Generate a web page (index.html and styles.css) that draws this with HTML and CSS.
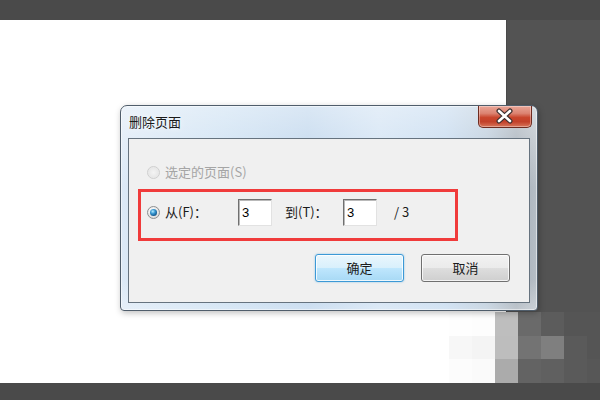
FILE: index.html
```html
<!DOCTYPE html>
<html lang="zh-CN">
<head>
<meta charset="utf-8">
<title>删除页面</title>
<link rel="stylesheet" href="styles.css">
</head>
<body>
<div class="screen">
  <div class="topbar"></div>
  <div class="middle">
    <div class="canvas"></div>
    <div class="sidepanel"></div>
  </div>
  <div class="bottombar"></div>

  <div class="mosaic">
    <i style="background:#fefefe"></i><i style="background:#fdfdfd"></i><i style="background:#bebebe"></i><i style="background:#6a6a6a"></i><i style="background:#5c5c5c"></i><i style="background:#555555"></i><i style="background:#555555"></i>
    <i style="background:#f7f7f7"></i><i style="background:#f4f4f4"></i><i style="background:#bdbdbd"></i><i style="background:#737373"></i><i style="background:#7f7f7f"></i><i style="background:#5a5a5a"></i><i style="background:#555555"></i>
    <i style="background:#fcfcfc"></i><i style="background:#fafafa"></i><i style="background:#ababab"></i><i style="background:#636363"></i><i style="background:#606060"></i><i style="background:#5a5a5a"></i><i style="background:#575757"></i>
  </div>

  <div class="dialog">
    <div class="titlebar">
      <span class="title">删除页面</span>
    </div>
    <button class="close" aria-label="关闭">
      <svg width="20" height="16" viewBox="0 0 20 16">
        <path d="M4 3 L15 13 M15 3 L4 13" stroke="#3d3030" stroke-width="5" stroke-linecap="round" fill="none"/>
        <path d="M4 3 L15 13 M15 3 L4 13" stroke="#ffffff" stroke-width="2.6" stroke-linecap="round" fill="none"/>
      </svg>
    </button>
    <div class="client">
      <div class="row disabled">
        <span class="radio radio-off"></span>
        <span class="label">选定的页面(S)</span>
      </div>
      <div class="range">
        <span class="radio radio-on"></span>
        <span class="label from-label">从(F)：</span>
        <input class="field" type="text" value="3" readonly>
        <span class="label to-label">到(T)：</span>
        <input class="field" type="text" value="3" readonly>
        <span class="label total">/ 3</span>
      </div>
      <div class="actions">
        <button class="btn btn-default">确定</button>
        <button class="btn">取消</button>
      </div>
    </div>
  </div>
</div>
</body>
</html>
```

FILE: styles.css
```css
* { box-sizing: border-box; }

html, body {
  margin: 0;
  padding: 0;
  width: 600px;
  height: 400px;
  overflow: hidden;
  font-family: "Noto Sans CJK SC", "Liberation Sans", sans-serif;
}

.screen {
  position: relative;
  width: 600px;
  height: 400px;
  display: flex;
  flex-direction: column;
  background: #ffffff;
}

.topbar {
  height: 20px;
  background: #4a4a4a;
}

.middle {
  flex: 1;
  display: flex;
}

.canvas {
  flex: 1;
  background: #ffffff;
}

.sidepanel {
  width: 94px;
  background: #535353;
  border-left: 1px solid #494949;
}

.bottombar {
  height: 17px;
  background: #4a4a4a;
}

/* pixelated area */
.mosaic {
  position: absolute;
  left: 449px;
  top: 312px;
  display: grid;
  grid-template-columns: repeat(6, 23px) 13px;
  grid-template-rows: 24px 23px 24px;
}
.mosaic i { display: block; }

/* dialog window */
.dialog {
  position: absolute;
  left: 120px;
  top: 105px;
  width: 418px;
  height: 206px;
  border: 1px solid #4f5d6b;
  border-radius: 7px 7px 4px 4px;
  padding: 0 7px 7px 7px;
  display: flex;
  flex-direction: column;
  background:
    linear-gradient(to bottom, rgba(255,255,255,0.45), rgba(255,255,255,0) 40%, rgba(255,255,255,0) 85%, rgba(255,255,255,0.3)),
    linear-gradient(to right, #dce9f6 0%, #cadff2 25%, #bcd4ec 45%, #cfe1f3 62%, #c3d9ef 78%, #b8c9d9 88%, #a3adb7 95%, #b6bec6 100%);
  box-shadow: 0 0 0 1px rgba(255,255,255,0.5) inset, 1px 2px 6px rgba(0,0,0,0.25);
}

.titlebar {
  height: 32px;
  display: flex;
  align-items: center;
  padding-left: 1px;
}

.title {
  font-size: 13px;
  line-height: 16px;
  color: #1a1a1a;
  text-shadow: 0 0 6px rgba(255,255,255,0.9);
}

.close {
  position: absolute;
  top: 0;
  right: 5px;
  width: 54px;
  height: 22px;
  margin: 0;
  padding: 0;
  border: 1px solid #6e2b20;
  border-top: none;
  border-radius: 0 0 5px 5px;
  background: linear-gradient(to bottom, #e9a597 0%, #dc8371 35%, #c9452c 55%, #c2412a 75%, #d8765b 100%);
  box-shadow: inset 0 0 0 1px rgba(255,255,255,0.35);
  display: flex;
  align-items: center;
  justify-content: center;
}
.close svg { display: block; margin-top: -1px; }

.client {
  flex: 1;
  background: #f0f0f0;
  border: 1px solid #66737f;
  padding-top: 25px;
  display: flex;
  flex-direction: column;
  align-items: flex-start;
}

.label {
  font-size: 13px;
  line-height: 16px;
  color: #1b1b1b;
  white-space: nowrap;
}

.row {
  height: 16px;
  margin-left: 18px;
  display: flex;
  align-items: center;
  gap: 5px;
}
.row.disabled .label { color: #a5a5a5; }

.radio {
  position: relative;
  width: 13px;
  height: 13px;
  border-radius: 50%;
  flex: none;
}
.radio-off {
  border: 1px solid #cfcfcf;
  background: radial-gradient(circle at 50% 50%, #f4f4f4 0%, #e8e8e8 60%, #f6f6f6 100%);
}
.radio-on {
  border: 1px solid #8d8f91;
  background: radial-gradient(circle at 40% 35%, #ffffff 0%, #e6e6e6 55%, #cfcfcf 100%);
}
.radio-on::after {
  content: "";
  position: absolute;
  left: 2px;
  top: 2px;
  width: 7px;
  height: 7px;
  border-radius: 50%;
  background: radial-gradient(circle at 40% 35%, #b8ecff 0%, #3a9ad4 35%, #155d93 70%, #0d3c63 100%);
}

.range {
  margin-top: 9px;
  margin-left: 9px;
  width: 320px;
  height: 52px;
  border: 3px solid #f03b3b;
  padding: 0 0 6px 6px;
  display: flex;
  align-items: center;
}
.from-label { margin-left: 5px; width: 73px; }
.to-label { margin-left: 13px; width: 58px; }
.total { margin-left: 17px; }

.field {
  width: 34px;
  height: 27px;
  margin: 0;
  padding: 0 0 0 3px;
  font-family: "Liberation Sans", sans-serif;
  font-size: 13px;
  color: #000;
  background: #ffffff;
  border: 1px solid;
  border-color: #707070 #e2e2e2 #e2e2e2 #707070;
  box-shadow: inset 1px 1px 0 #b9b9b9;
  outline: none;
}

.actions {
  align-self: stretch;
  margin-top: 13px;
  padding-right: 19px;
  display: flex;
  justify-content: flex-end;
  gap: 17px;
}

.btn {
  width: 89px;
  height: 28px;
  margin: 0;
  padding: 0;
  font-family: "Noto Sans CJK SC", sans-serif;
  font-size: 13px;
  line-height: 16px;
  color: #1b1b1b;
  border: 1px solid #707070;
  border-radius: 3px;
  background: linear-gradient(to bottom, #f2f2f2 0%, #ebebeb 48%, #dddddd 52%, #cfcfcf 100%);
  box-shadow: inset 0 0 0 1px rgba(255,255,255,0.75);
}

.btn-default {
  border-color: #3c99d6;
  background: linear-gradient(to bottom, #eaf6fd 0%, #d9f0fc 48%, #bee6fd 52%, #a7d9f5 100%);
  box-shadow: inset 0 0 0 1px rgba(255,255,255,0.8), 0 0 2px rgba(60,160,220,0.6);
}
```
